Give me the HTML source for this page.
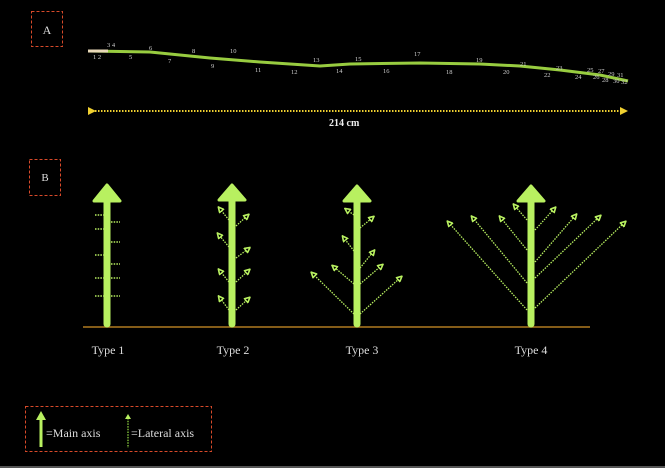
<!DOCTYPE html>
<html><head><meta charset="utf-8"><style>
html,body{margin:0;padding:0;background:#000;}
svg{display:block;}
text{font-family:"Liberation Serif",serif;}
</style></head><body>
<svg width="665" height="468" viewBox="0 0 665 468" xmlns="http://www.w3.org/2000/svg">
<defs>
<marker id="ah" viewBox="0 0 10 10" refX="5" refY="5" markerWidth="5" markerHeight="5" orient="auto"><path d="M1,1 L9,5 L1,9 z" fill="#000" stroke="#b8f060" stroke-width="2.5"/></marker>
<marker id="ay" viewBox="0 0 10 10" refX="5" refY="5" markerWidth="4" markerHeight="4" orient="auto"><path d="M0,0 L10,5 L0,10 z" fill="#f0d030"/></marker>
</defs>
<rect width="665" height="468" fill="#000"/>
<rect x="0" y="466" width="665" height="2" fill="#555"/>
<rect x="31.5" y="11.5" width="31" height="35" fill="none" stroke="#d84a2a" stroke-width="1" stroke-dasharray="3,2"/>
<text x="47" y="34" font-size="12" fill="#ddd" text-anchor="middle">A</text>
<path d="M88,51 L150,52 L210,58 L260,62 L320,66 L350,64 L420,63 L480,64 L520,66 L560,70 L600,75 L628,81" fill="none" stroke="#98cc40" stroke-width="3"/>
<path d="M88,51 L108,51" stroke="#e8d8b8" stroke-width="3"/>
<g font-size="6.5" fill="#ccc">
<text x="93" y="59">1 2</text><text x="107" y="47">3 4</text><text x="129" y="59">5</text><text x="149" y="50">6</text>
<text x="168" y="63">7</text><text x="192" y="53">8</text><text x="211" y="68">9</text><text x="230" y="53">10</text>
<text x="255" y="72">11</text><text x="291" y="74">12</text><text x="313" y="62">13</text><text x="336" y="73">14</text>
<text x="355" y="61">15</text><text x="383" y="73">16</text><text x="414" y="56">17</text><text x="446" y="74">18</text>
<text x="476" y="62">19</text><text x="503" y="74">20</text><text x="520" y="66">21</text><text x="544" y="77">22</text>
<text x="556" y="70">23</text><text x="575" y="79">24</text><text x="587" y="72">25</text><text x="593" y="79">26</text>
<text x="598" y="73">27</text><text x="602" y="82">28</text><text x="608" y="76">29</text><text x="613" y="83">30</text>
<text x="617" y="77">31</text><text x="621" y="84">32</text>
</g>
<line x1="92" y1="111" x2="624" y2="111" stroke="#f0d030" stroke-width="2" stroke-dasharray="1.5,1.5" marker-start="url(#ay)" marker-end="url(#ay)"/>
<text x="329" y="126" font-size="10" font-weight="bold" fill="#eee">214 cm</text>
<rect x="29.5" y="159.5" width="31" height="36" fill="none" stroke="#d84a2a" stroke-width="1" stroke-dasharray="3,2"/>
<text x="45" y="181" font-size="11" fill="#ddd" text-anchor="middle">B</text>
<line x1="83" y1="327" x2="590" y2="327" stroke="#b07a20" stroke-width="1.5"/>
<g fill="#b8f060" stroke="#b8f060" stroke-linejoin="round">
<line x1="107" y1="200" x2="107" y2="324" stroke-width="7" stroke-linecap="round"/>
<path d="M94,201 L107,185 L120,201 Z" stroke-width="3"/>
<line x1="232" y1="200" x2="232" y2="324" stroke-width="7" stroke-linecap="round"/>
<path d="M219,200 L232,185 L245,200 Z" stroke-width="3"/>
<line x1="357" y1="200" x2="357" y2="324" stroke-width="7" stroke-linecap="round"/>
<path d="M344,201 L357,186 L370,201 Z" stroke-width="3"/>
<line x1="531" y1="200" x2="531" y2="324" stroke-width="7" stroke-linecap="round"/>
<path d="M518,201 L531,186 L544,201 Z" stroke-width="3"/>
</g>
<g stroke="#b8f060" stroke-width="1.5" stroke-dasharray="1.5,1.2">
<line x1="95" y1="215" x2="104" y2="215"/><line x1="95" y1="229" x2="104" y2="229"/><line x1="95" y1="255" x2="104" y2="255"/><line x1="95" y1="278" x2="104" y2="278"/><line x1="95" y1="296" x2="104" y2="296"/>
<line x1="111" y1="222" x2="120" y2="222"/><line x1="111" y1="242" x2="120" y2="242"/><line x1="111" y1="264" x2="120" y2="264"/><line x1="111" y1="278" x2="120" y2="278"/><line x1="111" y1="296" x2="120" y2="296"/>
</g>
<g stroke="#b8f060" stroke-width="1.3" stroke-dasharray="1.5,1.2" marker-end="url(#ah)">
<line x1="229" y1="220" x2="220" y2="209"/><line x1="229" y1="247" x2="219" y2="235"/><line x1="229" y1="282" x2="220" y2="271"/><line x1="229" y1="310" x2="220" y2="298"/>
<line x1="236" y1="226" x2="247" y2="216"/><line x1="236" y1="258" x2="248" y2="249"/><line x1="236" y1="282" x2="248" y2="271"/><line x1="236" y1="310" x2="248" y2="299"/>
<line x1="354" y1="215" x2="347" y2="210"/><line x1="354" y1="251" x2="344" y2="238"/><line x1="354" y1="284" x2="334" y2="267"/><line x1="354" y1="314" x2="313" y2="274"/>
<line x1="360" y1="228" x2="372" y2="218"/><line x1="360" y1="268" x2="373" y2="252"/><line x1="360" y1="284" x2="381" y2="266"/><line x1="360" y1="314" x2="400" y2="278"/>
<line x1="527" y1="220" x2="515" y2="206"/><line x1="527" y1="250" x2="501" y2="218"/><line x1="527" y1="283" x2="473" y2="218"/><line x1="527" y1="310" x2="449" y2="223"/>
<line x1="535" y1="230" x2="554" y2="209"/><line x1="535" y1="262" x2="575" y2="216"/><line x1="535" y1="278" x2="599" y2="217"/><line x1="535" y1="308" x2="624" y2="223"/>
</g>
<g font-size="12" fill="#ddd" text-anchor="middle">
<text x="108" y="354">Type 1</text><text x="233" y="354">Type 2</text><text x="362" y="354">Type 3</text><text x="531" y="354">Type 4</text>
</g>
<rect x="25.5" y="406.5" width="186" height="45" fill="none" stroke="#d84a2a" stroke-width="1" stroke-dasharray="3,2"/>
<line x1="41" y1="418" x2="41" y2="447" stroke="#b8f060" stroke-width="3"/>
<path d="M36,420 L41,411 L46,420 Z" fill="#b8f060"/>
<text x="46" y="437" font-size="12" fill="#ddd">=Main axis</text>
<line x1="128" y1="418" x2="128" y2="448" stroke="#8cd040" stroke-width="1.3" stroke-dasharray="1.5,1.2"/>
<path d="M125,419 L128,414 L131,419 Z" fill="#b8f060"/>
<text x="131" y="437" font-size="12" fill="#ddd">=Lateral axis</text>
</svg>
</body></html>
